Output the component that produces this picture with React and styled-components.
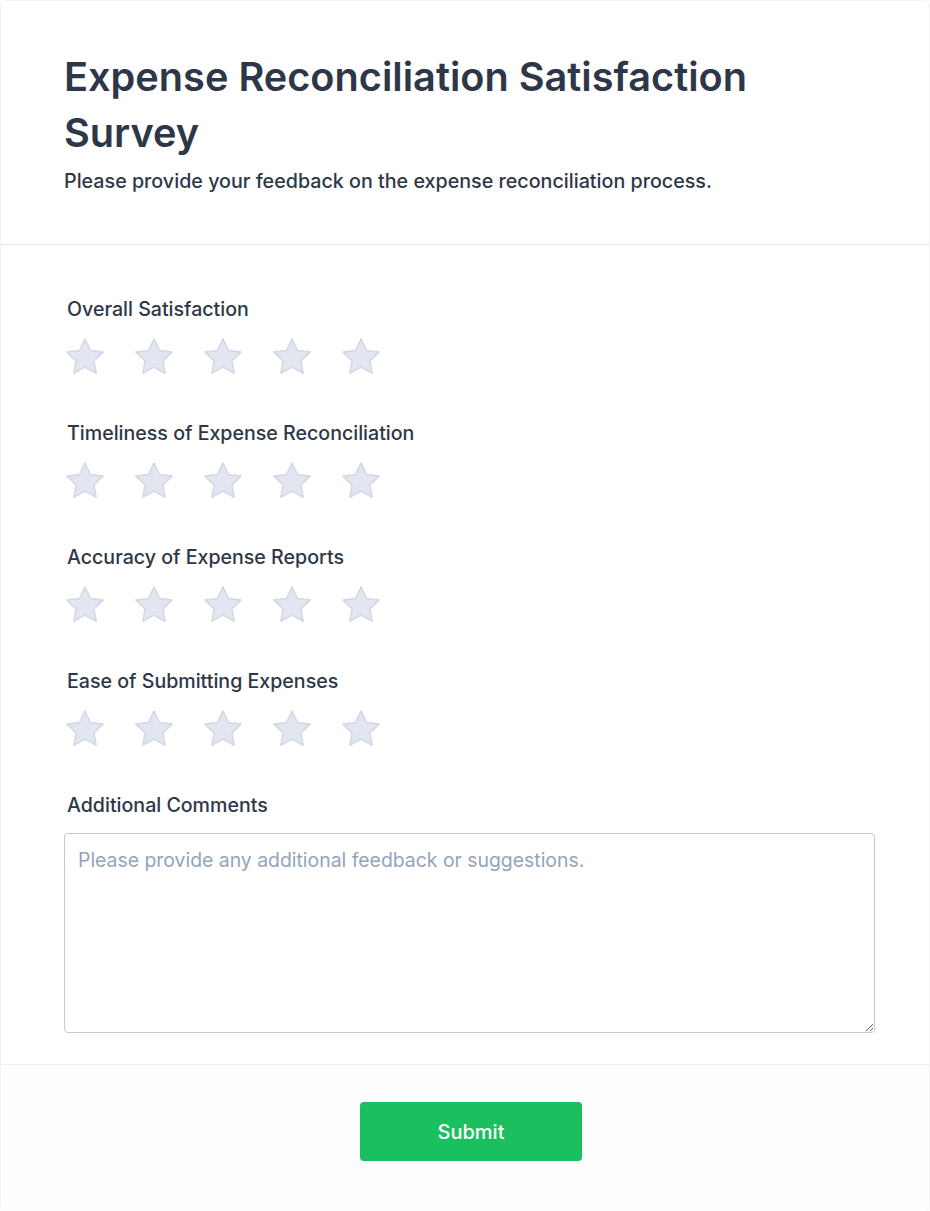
import React from 'react'
import styled, { createGlobalStyle } from 'styled-components'

const GlobalStyle = createGlobalStyle`
  body {
    margin: 0;
    background: #ffffff;
    font-family: Inter, 'Noto Sans', sans-serif;
    color: #2d3748;
  }
`

const Card = styled.div`
  box-sizing: border-box;
  width: 930px;
  border: 1px solid #f1f2f5;
  border-radius: 6px;
  background: #fff;
  overflow: hidden;
`

const Header = styled.header`
  padding: 48px 63px 49px;
  border-bottom: 1px solid #e2e4ea;
`

const Title = styled.h1`
  margin: 0;
  font-size: 39.7px;
  line-height: 56px;
  font-weight: 600;
  color: #2d3748;
  max-width: 760px;
`

const Subtitle = styled.p`
  margin: 6px 0 0;
  font-size: 19.7px;
  line-height: 28px;
  font-weight: 500;
  color: #2d3748;
`

const Body = styled.div`
  padding: 50px 54px 31px 66px;
`

const Question = styled.div`
  margin-bottom: 43px;
`

const Label = styled.div`
  font-size: 19.6px;
  line-height: 28px;
  font-weight: 500;
  color: #2d3748;
  margin-bottom: ${({ $tight }) => ($tight ? '13px' : '14px')};
`

const Stars = styled.div`
  display: flex;
  gap: 31px;
  margin-left: -1px;
`

const StarButton = styled.button`
  width: 38px;
  height: 40px;
  padding: 0;
  border: 0;
  background: none;
  cursor: pointer;
  display: flex;
  align-items: center;
  justify-content: center;
`

const TextArea = styled.textarea`
  display: block;
  box-sizing: border-box;
  width: 811px;
  height: 200px;
  margin-left: -3px;
  padding: 12px 13px;
  border: 1px solid #c4c7d8;
  border-radius: 4px;
  font-family: Inter, 'Noto Sans', sans-serif;
  font-size: 19.4px;
  line-height: 28px;
  color: #2d3748;
  resize: vertical;
  outline: none;
  &::placeholder {
    color: #93a4bb;
  }
`

const Footer = styled.footer`
  border-top: 1px solid #eceef3;
  background: #fefefe;
  padding: 37px 0 50px 12px;
  display: flex;
  justify-content: center;
`

const SubmitButton = styled.button`
  width: 222px;
  height: 59px;
  border: 0;
  border-radius: 4px;
  background: #1abf5e;
  color: #fff;
  font-family: Inter, 'Noto Sans', sans-serif;
  font-size: 20px;
  font-weight: 500;
  cursor: pointer;
`

function Star() {
  return (
    <svg width='38' height='37' viewBox='2.2 2.1 19.6 19'>
      <path
        d='M12 2.6l2.85 5.9 6.45.85-4.72 4.48 1.18 6.42L12 17.1l-5.76 3.15 1.18-6.42L2.7 9.35l6.45-.85z'
        fill='#e2e6f0'
        stroke='#d3d8e4'
        strokeWidth='0.8'
        strokeLinejoin='round'
      />
    </svg>
  )
}

const questions = [
  'Overall Satisfaction',
  'Timeliness of Expense Reconciliation',
  'Accuracy of Expense Reports',
  'Ease of Submitting Expenses',
]

function App() {
  return (
    <>
      <GlobalStyle />
      <Card>
        <Header>
          <Title>Expense Reconciliation Satisfaction Survey</Title>
          <Subtitle>
            Please provide your feedback on the expense reconciliation process.
          </Subtitle>
        </Header>
        <Body>
          {questions.map((q) => (
            <Question key={q}>
              <Label $tight>{q}</Label>
              <Stars>
                {[1, 2, 3, 4, 5].map((n) => (
                  <StarButton key={n} aria-label={`${n} star`}>
                    <Star />
                  </StarButton>
                ))}
              </Stars>
            </Question>
          ))}
          <Label>Additional Comments</Label>
          <TextArea placeholder='Please provide any additional feedback or suggestions.' />
        </Body>
        <Footer>
          <SubmitButton>Submit</SubmitButton>
        </Footer>
      </Card>
    </>
  )
}

export default App
